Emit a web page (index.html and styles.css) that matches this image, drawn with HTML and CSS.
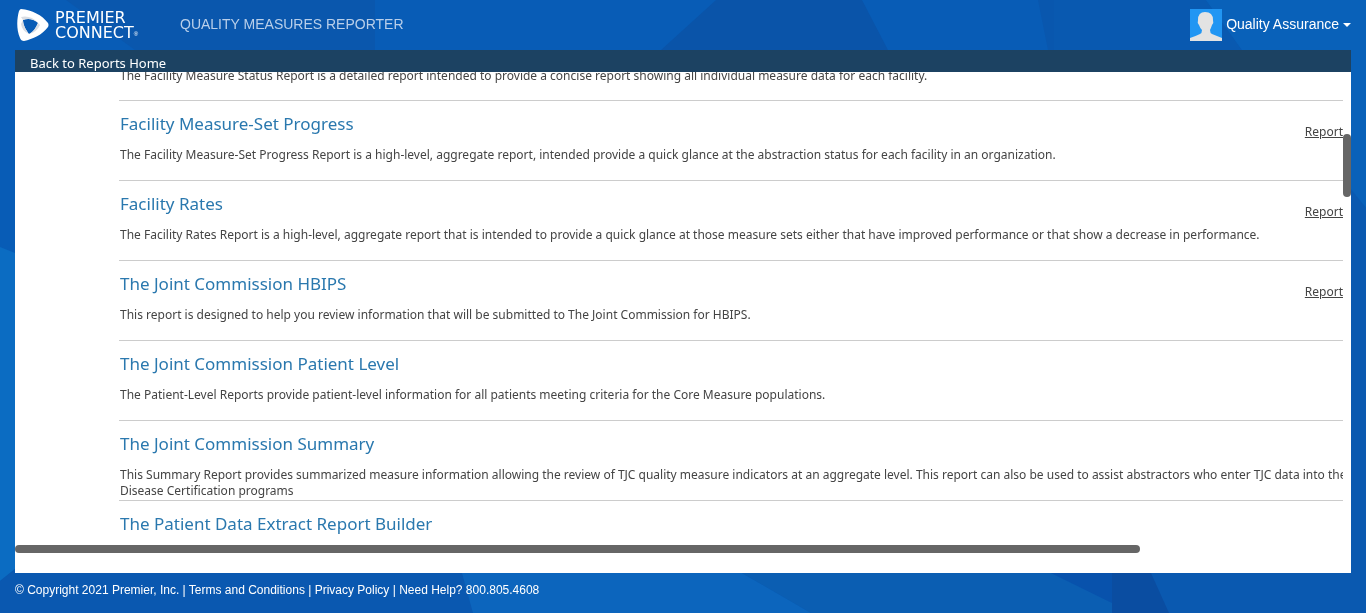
FILE: index.html
```html
<!DOCTYPE html>
<html lang="en">
<head>
<meta charset="utf-8">
<title>Quality Measures Reporter</title>
<link rel="stylesheet" href="styles.css">
</head>
<body>
<svg class="backdrop" viewBox="0 0 1366 613" preserveAspectRatio="none" aria-hidden="true">
  <rect width="1366" height="613" fill="#085cb6"/>
  <path d="M66 0H375V50H135Z" fill="#0a57ad"/>
  <path d="M716 0H862L888 50H661Z" fill="#0a54a9"/>
  <path d="M1038 0H1054V50H1048Z" fill="#0957ae"/>
  <path d="M1054 0H1206L1242 50H1054Z" fill="#0959b0"/>
  <path d="M1206 0H1366V208L1242 50Z" fill="#0961b9"/>
  <path d="M1351 190L1366 208V613H1150V573H1351Z" fill="#0a59b0"/>
  <path d="M0 247L15 253V569L0 581Z" fill="#0b6cc2"/>
  <path d="M0 581L15 569H462L473 613H0Z" fill="#0a58b0"/>
  <path d="M462 573H742L811 613H473Z" fill="#0c65bd"/>
  <path d="M742 573H1051L1133 613H811Z" fill="#0b5eb2"/>
  <path d="M1051 573H1112V603Z" fill="#0852ac"/>
  <path d="M1112 573H1151L1169 613H1112Z" fill="#0a4da1"/>
</svg>

<header class="masthead">
  <a class="brand" href="#" aria-label="Premier Connect">
    <svg class="brand-mark" viewBox="0 0 32 32" aria-hidden="true">
      <path fill="#fff" fill-rule="evenodd" d="M4 0C15 1 25 6 31 14Q32 16 31 18C25 26 16 30 7 32Q4 32 3 29C-1 20 0 9 2 2Q3 0 4 0ZM6 11C6 16 9 21 12 25C16 23 19 19 21 14C17 10 11 9 6 11Z"/>
      <path fill="#d9dde3" d="M21 14C17 10 11 9 6 11L4 8Q14 6 21 14ZM12 25C9 21 6 16 6 11L4 15Q5 22 12 25ZM12 25C16 23 19 19 21 14L23 16Q20 23 12 25Z"/>
    </svg>
    <span class="brand-name"><span>PREMIER</span><span>CONNECT</span></span>
    <span class="brand-reg">®</span>
  </a>
  <span class="product">QUALITY MEASURES REPORTER</span>
  <button class="account" type="button">
    <svg class="avatar" viewBox="0 0 32 32" aria-hidden="true">
      <rect width="32" height="32" fill="#2196f3"/>
      <path fill="#e3e3e3" d="M0 32V29Q6 27 10 25Q12 24 12 21Q10 19 9 16Q7 14 8 11Q8 3 15 3Q23 3 23 11Q24 14 22 16Q21 19 20 21Q20 24 22 25Q27 27 32 29V32Z"/>
    </svg>
    <span class="account-name">Quality Assurance</span>
    <span class="caret"></span>
  </button>
</header>

<nav class="crumbs"><a href="#">Back to Reports Home</a></nav>

<main class="panel">
  <div class="viewport">
    <ul class="reports">
      <li class="report report-partial"><p>The Facility Measure Status Report is a detailed report intended to provide a concise report showing all individual measure data for each facility.</p></li>
      <li class="report">
        <div><h2>Facility Measure-Set Progress</h2>
        <p>The Facility Measure-Set Progress Report is a high-level, aggregate report, intended provide a quick glance at the abstraction status for each facility in an organization.</p></div>
        <a href="#">Report</a>
      </li>
      <li class="report">
        <div><h2>Facility Rates</h2>
        <p>The Facility Rates Report is a high-level, aggregate report that is intended to provide a quick glance at those measure sets either that have improved performance or that show a decrease in performance.</p></div>
        <a href="#">Report</a>
      </li>
      <li class="report">
        <div><h2>The Joint Commission HBIPS</h2>
        <p>This report is designed to help you review information that will be submitted to The Joint Commission for HBIPS.</p></div>
        <a href="#">Report</a>
      </li>
      <li class="report">
        <div><h2>The Joint Commission Patient Level</h2>
        <p>The Patient-Level Reports provide patient-level information for all patients meeting criteria for the Core Measure populations.</p></div>
      </li>
      <li class="report">
        <div><h2>The Joint Commission Summary</h2>
        <p>This Summary Report provides summarized measure information allowing the review of TJC quality measure indicators at an aggregate level. This report can also be used to assist abstractors who enter TJC data into the<br>Disease Certification programs</p></div>
      </li>
      <li class="report">
        <div><h2>The Patient Data Extract Report Builder</h2></div>
      </li>
    </ul>
  </div>
  <div class="track-y"><div class="thumb-y"></div></div>
  <div class="track-x"><div class="thumb-x"></div></div>
</main>

<footer class="footer">
  © Copyright 2021 Premier, Inc. | <a href="#">Terms and Conditions</a> | <a href="#">Privacy Policy</a> | Need Help? 800.805.4608
</footer>
</body>
</html>
```
FILE: styles.css
```css
* { box-sizing: border-box; }

body {
  margin: 0;
  height: 100vh;
  padding: 0 15px;
  display: flex;
  flex-direction: column;
  overflow: hidden;
  font-family: "Noto Sans", sans-serif;
  font-size: 12px;
  color: #444;
}

a { color: inherit; text-decoration: none; }

.backdrop {
  position: fixed;
  inset: 0;
  z-index: -1;
  width: 100%;
  height: 100%;
}

.masthead {
  flex: none;
  height: 50px;
  display: flex;
  align-items: center;
  font-family: "Liberation Sans", Arial, sans-serif;
  color: #fff;
}

.brand {
  display: flex;
  align-items: center;
  width: 165px;
  padding-left: 2px;
}

.brand-mark { width: 32px; height: 32px; margin-right: 6px; }

.brand-name {
  display: flex;
  flex-direction: column;
  font-family: "DejaVu Sans", sans-serif;
  font-size: 16px;
  line-height: 15px;
}

.brand-reg { align-self: flex-end; padding-bottom: 4px; font-size: 6px; line-height: 6px; }

.product { padding-bottom: 2px; font-size: 14px; color: #b9cfea; }

.account {
  display: flex;
  align-items: center;
  gap: 4px;
  margin-left: auto;
  padding: 0;
  border: 0;
  background: none;
  font-family: inherit;
  font-size: 14px;
  color: #fff;
}

.account-name { padding-bottom: 2px; }

.avatar { width: 32px; height: 32px; }

.caret {
  border: 4px solid transparent;
  border-top-color: #fff;
  border-bottom: 0;
}

.crumbs {
  flex: none;
  height: 22px;
  padding: 3px 15px 0;
  background: #1c4262;
  color: #fff;
  font-size: 13px;
  line-height: 20px;
}

.panel {
  flex: 1;
  min-height: 0;
  display: grid;
  grid-template-columns: minmax(0, 1fr) 8px;
  grid-template-rows: minmax(0, 1fr) 8px;
  padding-bottom: 20px;
  background: #fff;
}

.viewport { overflow: hidden; padding-left: 104px; }

.reports { margin: 0; padding: 0; list-style: none; }

.report {
  height: 80px;
  display: grid;
  grid-template-columns: minmax(0, 1fr) auto;
  padding: 11px 0 0 1px;
  border-bottom: 1px solid #ccc;
  white-space: nowrap;
}

.report:last-child { border-bottom: 0; }

.report h2 {
  margin: 0 0 11px;
  font-size: 17px;
  font-weight: 400;
  line-height: 24px;
  color: #2a78ae;
}

.report p { margin: 0; line-height: 16px; }

.report a { padding-top: 12px; line-height: 16px; text-decoration: underline; }

.report-partial { height: 29px; padding-top: 0; }
.report-partial p { margin-top: -4px; }

.track-y { padding-top: 62px; }
.thumb-y { height: 63px; border-radius: 4px; background: #666; }
.track-x { grid-column: 1 / -1; }
.thumb-x { width: 84.2%; height: 8px; border-radius: 4px; background: #666; }

.footer {
  flex: none;
  height: 40px;
  padding-top: 9px;
  font-family: "Liberation Sans", Arial, sans-serif;
  line-height: 16px;
  color: #fff;
}
```
